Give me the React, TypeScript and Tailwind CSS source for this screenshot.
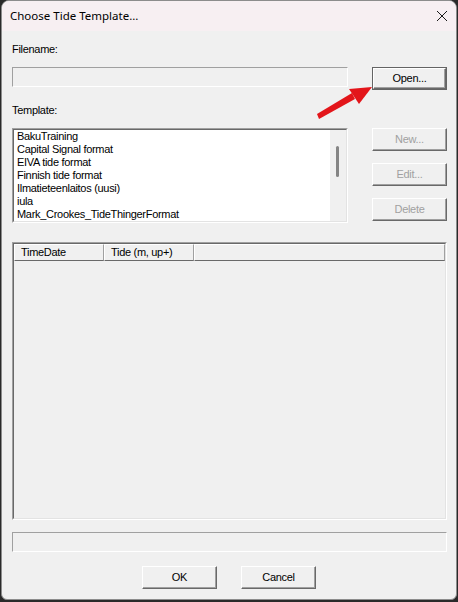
import React from "react";

const body = { fontFamily: '"Liberation Sans", Arial, sans-serif' };

function Btn({ label, disabled, isDefault, className = "" }: { label: string; disabled?: boolean; isDefault?: boolean; className?: string }) {
  const inner = (
    <div
      className={`flex h-full w-full items-center justify-center border-t border-l border-t-white border-l-white border-b border-r border-b-[#696969] border-r-[#696969] bg-[#f0f0f0] shadow-[inset_-1px_-1px_0_#a0a0a0] text-[11px] tracking-[-0.3px] ${disabled ? "text-[#a0a0a0]" : "text-black"}`}
    >
      {label}
    </div>
  );
  if (isDefault) {
    return <div className={`h-[23px] w-[75px] border border-[#646464] ${className}`}>{inner}</div>;
  }
  return <div className={`h-[23px] w-[75px] ${className}`}>{inner}</div>;
}

function Sunken({ className = "", children }: { className?: string; children?: React.ReactNode }) {
  return (
    <div className={`border-t border-l border-t-[#a0a0a0] border-l-[#a0a0a0] border-b border-r border-b-white border-r-white ${className}`}>{children}</div>
  );
}

const items = [
  "BakuTraining",
  "Capital Signal format",
  "EIVA tide format",
  "Finnish tide format",
  "Ilmatieteenlaitos (uusi)",
  "iula",
  "Mark_Crookes_TideThingerFormat",
];

function HeaderCell({ label, w }: { label?: string; w?: string }) {
  return (
    <div
      className={`h-[17px] ${w ?? "flex-1"} flex items-center border-t border-l border-t-white border-l-white border-b border-r border-b-[#696969] border-r-[#a0a0a0] bg-[#f0f0f0] pl-[6px] text-[11px] tracking-[-0.3px] text-black`}
    >
      {label}
    </div>
  );
}

export default function App() {
  return (
    <div className="relative h-[602px] w-[458px] overflow-hidden bg-[#2a2a2a]">
      <div className="ml-[1px] flex h-[600px] w-[456px] flex-col overflow-hidden rounded-t-[8px] rounded-b-[6px] border border-[#8c8c8c] bg-[#f0f0f0]">
        <div className="flex h-[30px] shrink-0 items-center justify-between bg-[#f7eff2] pl-[8px] pr-[7px]">
          <span className="text-[11.5px] text-black" style={{ fontFamily: '"Segoe UI", "Noto Sans", sans-serif' }}>
            Choose Tide Template...
          </span>
          <svg width="12" height="12" viewBox="0 0 12 12" className="mr-[1px]">
            <path d="M1 1 L11 11 M11 1 L1 11" stroke="#1a1a1a" strokeWidth="1" />
          </svg>
        </div>
        <div className="flex flex-1 flex-col pl-[10px] pr-[8px]" style={body}>
          <div className="mt-[12px] h-[13px] text-[11px] leading-[13px] tracking-[-0.3px] text-black">Filename:</div>
          <div className="mt-[11px] flex items-start">
            <Sunken className="h-[20px] w-[336px] bg-[#f0f0f0]" />
            <Btn label="Open..." isDefault className="ml-[24px]" />
          </div>
          <div className="mt-[14px] h-[13px] text-[11px] leading-[13px] tracking-[-0.3px] text-black">Template:</div>
          <div className="mt-[11px] flex items-start">
            <div className="h-[95px] w-[336px] border-t border-l border-t-[#a0a0a0] border-l-[#a0a0a0] border-b border-r border-b-white border-r-white">
              <div className="flex h-full w-full border-t border-l border-t-[#696969] border-l-[#696969] border-b border-r border-b-[#e3e3e3] border-r-[#e3e3e3]">
                <div className="flex-1 overflow-hidden bg-white pl-[3px]">
                  {items.map((it) => (
                    <div key={it} className="h-[13px] whitespace-nowrap text-[11px] leading-[13px] tracking-[-0.3px] text-black">
                      {it}
                    </div>
                  ))}
                </div>
                <div className="relative w-[16px] bg-[#f0f0f0]">
                  <div className="absolute left-[6px] top-[16px] h-[31px] w-[3px] rounded-full bg-[#858585]" />
                </div>
              </div>
            </div>
            <div className="ml-[24px] flex flex-col gap-[12px]">
              <Btn label="New..." disabled />
              <Btn label="Edit..." disabled />
              <Btn label="Delete" disabled />
            </div>
          </div>
          <div className="mt-[19px] h-[278px] w-[435px] border-t border-l border-t-[#a0a0a0] border-l-[#a0a0a0] border-b border-r border-b-white border-r-white">
            <div className="flex h-full w-full flex-col border-t border-l border-t-[#696969] border-l-[#696969] border-b border-r border-b-[#e3e3e3] border-r-[#e3e3e3] bg-[#f0f0f0]">
              <div className="flex">
                <HeaderCell label="TimeDate" w="w-[90px]" />
                <HeaderCell label="Tide (m, up+)" w="w-[90px]" />
                <HeaderCell />
              </div>
            </div>
          </div>
          <Sunken className="mt-[12px] h-[20px] w-[435px] bg-[#f0f0f0]" />
          <div className="mt-[14px] flex pl-[130px]">
            <Btn label="OK" />
            <Btn label="Cancel" className="ml-[24px]" />
          </div>
        </div>
      </div>
      <svg className="pointer-events-none absolute left-0 top-0" width="458" height="602">
        <polygon points="317,114 319,119 355,99 352,93" fill="#e3151a" />
        <polygon points="372,87 349,89 359,104" fill="#e3151a" />
      </svg>
    </div>
  );
}
